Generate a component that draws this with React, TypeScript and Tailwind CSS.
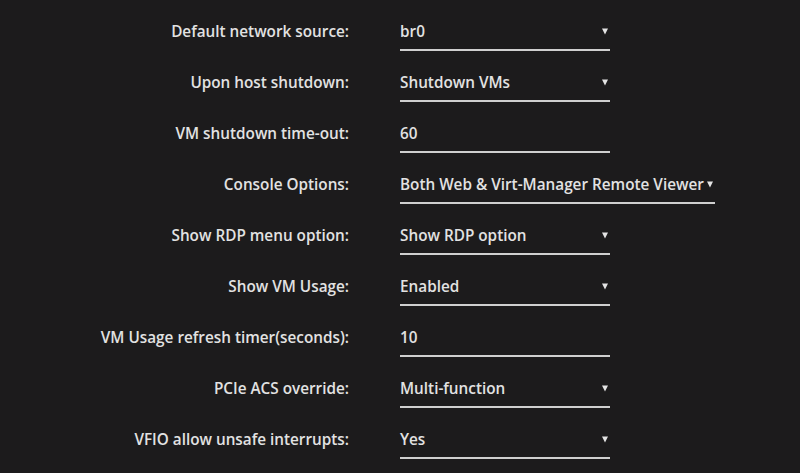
import React from 'react'

type Row = {
  label: string
  value: string
  select?: boolean
}

const rows: Row[] = [
  { label: 'Default network source:', value: 'br0', select: true },
  { label: 'Upon host shutdown:', value: 'Shutdown VMs', select: true },
  { label: 'VM shutdown time-out:', value: '60' },
  { label: 'Console Options:', value: 'Both Web & Virt-Manager Remote Viewer', select: true },
  { label: 'Show RDP menu option:', value: 'Show RDP option', select: true },
  { label: 'Show VM Usage:', value: 'Enabled', select: true },
  { label: 'VM Usage refresh timer(seconds):', value: '10' },
  { label: 'PCIe ACS override:', value: 'Multi-function', select: true },
  { label: 'VFIO allow unsafe interrupts:', value: 'Yes', select: true },
]

function Arrow() {
  return (
    <svg width="6" height="7" viewBox="0 0 6 7" className="shrink-0">
      <polygon points="0,0.5 6,0.5 3,6.5" fill="#e4e4e4" />
    </svg>
  )
}

export default function App() {
  return (
    <div
      className="w-[800px] h-[473px] bg-[#1c1b1c] text-[#e2e2e2] overflow-hidden pt-[21px]"
      style={{ fontFamily: '"Open Sans", "Liberation Sans", sans-serif' }}
    >
      <div className="flex flex-col gap-[21px]">
        {rows.map((row) => (
          <div key={row.label} className="flex items-start">
            <div className="w-[349px] text-right text-[15.3px] font-semibold leading-[20px]">{row.label}</div>
            <div className="ml-[51px] min-w-[210px] flex items-center pb-[8px] border-b-2 border-[#cfcfcf] text-[15.3px] font-semibold leading-[20px]">
              <span>{row.value}</span>
              {row.select && (
                <span className="ml-auto pl-[3px] pr-[2px]">
                  <Arrow />
                </span>
              )}
            </div>
          </div>
        ))}
      </div>
    </div>
  )
}
